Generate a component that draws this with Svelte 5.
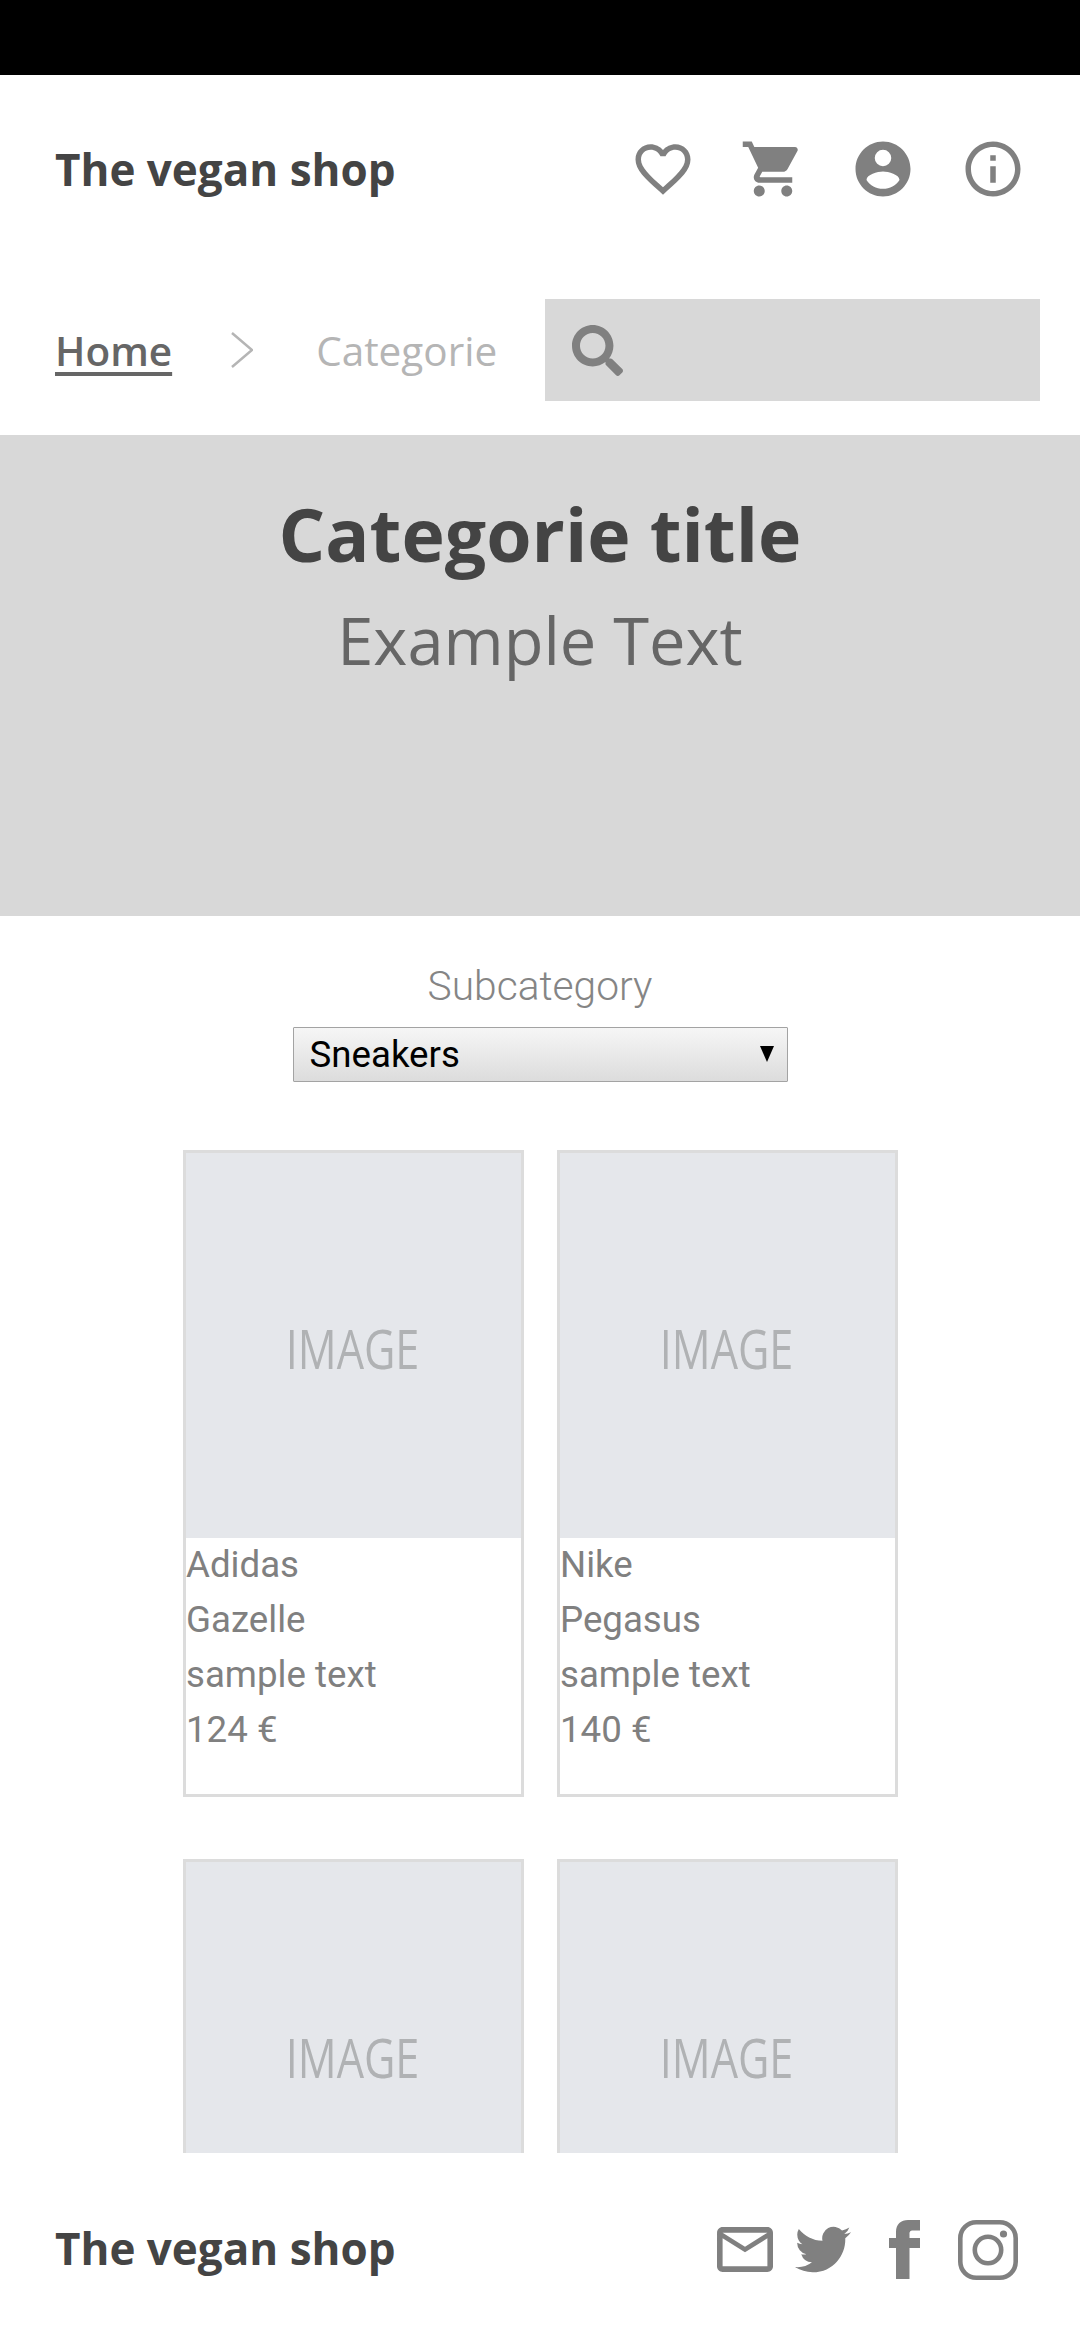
<script>
  const products = [
    { lines: ['Adidas', 'Gazelle', 'sample text', '124 €'] },
    { lines: ['Nike', 'Pegasus', 'sample text', '140 €'] },
    { lines: [] },
    { lines: [] }
  ]
</script>

<div class="phone">
  <div class="status"></div>

  <header class="top">
    <span class="brand">The vegan shop</span>
    <nav class="actions">
      <svg viewBox="0 0 24 24" aria-label="Favourites"><path d="M16.5 3c-1.74 0-3.41.81-4.5 2.09C10.91 3.81 9.24 3 7.5 3 4.42 3 2 5.42 2 8.5c0 3.78 3.4 6.86 8.55 11.54L12 21.35l1.45-1.32C18.6 15.36 22 12.28 22 8.5 22 5.42 19.58 3 16.5 3zm-4.4 15.55l-.1.1-.1-.1C7.14 14.24 4 11.39 4 8.5 4 6.5 5.5 5 7.5 5c1.54 0 3.04.99 3.57 2.36h1.87C13.46 5.99 14.96 5 16.5 5c2 0 3.5 1.5 3.5 3.5 0 2.89-3.14 5.74-7.9 10.05z"/></svg>
      <svg viewBox="0 0 24 24" aria-label="Cart"><path d="M7 18c-1.1 0-1.99.9-1.99 2S5.900 22 7 22s2-.9 2-2-.9-2-2-2zM1 2v2h2l3.600 7.590-1.350 2.450c-.160.280-.250.610-.250.960 0 1.100.9 2 2 2h12v-2H7.420c-.140 0-.250-.110-.250-.250l.030-.120.900-1.630h7.450c.750 0 1.410-.410 1.750-1.030l3.580-6.490c.080-.140.120-.310.120-.480 0-.550-.450-1-1-1H5.210l-.940-2H1zm16 16c-1.100 0-1.990.9-1.990 2s.890 2 1.990 2 2-.9 2-2-.9-2-2-2z"/></svg>
      <svg viewBox="0 0 24 24" aria-label="Account"><path fill-rule="evenodd" d="M12 2C6.480 2 2 6.480 2 12s4.480 10 10 10 10-4.480 10-10S17.520 2 12 2zm0 3a3 3 0 1 1 0 6 3 3 0 0 1 0-6zm0 14.200c-2.500 0-4.710-1.280-6-3.220.03-1.990 4-3.080 6-3.080 1.990 0 5.970 1.090 6 3.080-1.290 1.940-3.500 3.220-6 3.220z"/></svg>
      <svg viewBox="0 0 24 24" aria-label="Info"><path d="M11 7h2v2h-2zm0 4h2v6h-2zm1-9C6.480 2 2 6.480 2 12s4.480 10 10 10 10-4.480 10-10S17.520 2 12 2zm0 18c-4.410 0-8-3.590-8-8s3.590-8 8-8 8 3.590 8 8-3.590 8-8 8z"/></svg>
    </nav>
  </header>

  <div class="crumbs">
    <a href="#home" class="home">Home</a>
    <svg class="chevron" viewBox="0 0 22 36"><path d="M1 1l20 17L1 35" /></svg>
    <span class="current">Categorie</span>
    <div class="search">
      <svg viewBox="0 0 512 512"><path d="M505 442.700L405.300 343c-4.500-4.500-10.600-7-17-7H372c27.600-35.300 44-79.700 44-128C416 93.100 322.900 0 208 0S0 93.100 0 208s93.100 208 208 208c48.300 0 92.700-16.400 128-44v16.300c0 6.400 2.500 12.500 7 17l99.700 99.700c9.400 9.400 24.600 9.400 33.900 0l28.300-28.300c9.400-9.400 9.400-24.600.1-34zM208 336c-70.700 0-128-57.200-128-128 0-70.700 57.200-128 128-128 70.700 0 128 57.200 128 128 0 70.700-57.200 128-128 128z"/></svg>
    </div>
  </div>

  <main class="content">
    <section class="hero">
      <h1>Categorie title</h1>
      <p>Example Text</p>
    </section>

    <section class="filter">
      <label for="subcategory">Subcategory</label>
      <div class="select-wrap">
        <select id="subcategory">
          <option>Sneakers</option>
        </select>
      </div>
    </section>

    <section class="grid">
      {#each products as item}
        <article class="card">
          <div class="image"><span>IMAGE</span></div>
          <div class="info">
            {#each item.lines as line}
              <div>{line}</div>
            {/each}
          </div>
        </article>
      {/each}
    </section>
  </main>

  <footer class="bottom">
    <span class="brand">The vegan shop</span>
    <div class="social">
      <svg class="mail" viewBox="2 4 20 16" aria-label="Mail"><path d="M20 4H4c-1.100 0-1.990.9-1.990 2L2 18c0 1.100.9 2 2 2h16c1.100 0 2-.9 2-2V6c0-1.100-.9-2-2-2zm0 14H4V8l8 5 8-5v10zm-8-7L4 6h16l-8 5z"/></svg>
      <svg class="twitter" viewBox="0 2 24 20" aria-label="Twitter"><path d="M23.953 4.570a10 10 0 0 1-2.825.775 4.958 4.958 0 0 0 2.163-2.723c-.951.555-2.005.959-3.127 1.184a4.920 4.920 0 0 0-8.384 4.482C7.690 8.095 4.067 6.130 1.640 3.162a4.822 4.822 0 0 0-.666 2.475c0 1.710.870 3.213 2.188 4.096a4.904 4.904 0 0 1-2.228-.616v.060a4.923 4.923 0 0 0 3.946 4.827 4.996 4.996 0 0 1-2.212.085 4.936 4.936 0 0 0 4.604 3.417 9.867 9.867 0 0 1-6.102 2.105c-.39 0-.779-.023-1.170-.067a13.995 13.995 0 0 0 7.557 2.209c9.053 0 13.998-7.496 13.998-13.985 0-.210 0-.420-.015-.630A9.935 9.935 0 0 0 24 4.590z"/></svg>
      <svg class="facebook" viewBox="0 0 31 59" aria-label="Facebook"><path d="M7 59V28H0V18h7v-6C7 4 12 0 19 0h12v10.500h-7c-3 0-3.500 1.500-3.500 3.500v4H31v10H20.500v31z"/></svg>
      <svg class="insta" viewBox="0 0 60 60" aria-label="Instagram">
        <rect x="2.300" y="2.300" width="55.400" height="55.400" rx="16" class="line"/>
        <circle cx="30" cy="30" r="13.200" class="line"/>
        <circle cx="45.500" cy="14" r="3.600"/>
      </svg>
    </div>
  </footer>
</div>

<style>
  :global(body) {
    margin: 0;
    background: #fff;
  }

  .phone {
    width: 1080px;
    height: 2340px;
    display: flex;
    flex-direction: column;
    overflow: hidden;
    background: #fff;
    font-family: "Open Sans", sans-serif;
  }

  .status {
    height: 75px;
    flex: none;
    background: #000;
  }

  .top {
    height: 188px;
    flex: none;
    display: flex;
    align-items: center;
    justify-content: space-between;
    padding: 0 54px 0 55px;
    box-sizing: border-box;
  }

  .brand {
    font-size: 44px;
    font-weight: 700;
    color: #444;
  }

  .actions {
    display: flex;
    gap: 44px;
  }

  .actions svg {
    width: 66px;
    height: 66px;
    fill: #808080;
  }

  .crumbs {
    flex: none;
    height: 102px;
    margin: 36px 40px 34px 55px;
    display: flex;
    align-items: center;
  }

  .home {
    font-size: 40.500px;
    font-weight: 600;
    color: #666;
    text-decoration: underline;
    text-decoration-thickness: 4px;
    text-underline-offset: 6px;
  }

  .chevron {
    width: 22px;
    height: 36px;
    margin-left: 59px;
    fill: none;
    stroke: #b5b5b5;
    stroke-width: 2.500;
  }

  .current {
    margin-left: 63px;
    font-size: 40.500px;
    color: #b5b5b5;
  }

  .search {
    margin-left: auto;
    width: 495px;
    height: 102px;
    background: #d8d8d8;
    display: flex;
    align-items: center;
    padding-left: 27px;
    box-sizing: border-box;
  }

  .search svg {
    width: 51px;
    height: 51px;
    fill: #808080;
  }

  .content {
    flex: 1;
    min-height: 0;
    overflow: hidden;
  }

  .hero {
    height: 481px;
    background: #d8d8d8;
    padding-top: 50px;
    box-sizing: border-box;
    text-align: center;
  }

  .hero h1 {
    margin: 0;
    font-size: 73.330px;
    line-height: 98px;
    font-weight: 700;
    color: #444;
  }

  .hero p {
    margin: 12px 0 0;
    font-size: 65px;
    line-height: 90px;
    color: #666;
  }

  .filter {
    display: flex;
    flex-direction: column;
    align-items: center;
    margin-top: 45px;
  }

  .filter label {
    font-family: Roboto, sans-serif;
    font-weight: 300;
    font-size: 40.700px;
    line-height: 50px;
    color: #858585;
  }

  .select-wrap {
    position: relative;
    margin-top: 16px;
  }

  .select-wrap::after {
    content: "";
    position: absolute;
    top: 19px;
    right: 14px;
    border-top: 16px solid #000;
    border-left: 7.500px solid transparent;
    border-right: 7.500px solid transparent;
  }

  select {
    display: block;
    width: 495px;
    height: 55px;
    box-sizing: border-box;
    appearance: none;
    border: 1.500px solid #a3a3a3;
    border-radius: 1px;
    padding: 0 0 0 16px;
    background: linear-gradient(#f6f6f6, #dcdcdc);
    font-family: Roboto, sans-serif;
    font-size: 36.670px;
    color: #000;
  }

  .grid {
    display: grid;
    grid-template-columns: 341px 341px;
    justify-content: center;
    column-gap: 33px;
    row-gap: 62px;
    margin-top: 68px;
    padding-left: 1px;
  }

  .card {
    height: 647px;
    box-sizing: border-box;
    border: 3px solid #dcdcdc;
  }

  .image {
    height: 385px;
    background: #e5e7eb;
    display: flex;
    align-items: center;
    justify-content: center;
  }

  .image span {
    font-size: 54px;
    font-weight: 500;
    line-height: 60px;
    color: #b0b2b4;
    transform: scaleX(0.8);
    position: relative;
    top: 2px;
    left: -1px;
  }

  .info {
    margin-top: -1px;
    font-family: Roboto, sans-serif;
    font-size: 36.670px;
    line-height: 55px;
    color: #808080;
  }

  .bottom {
    flex: none;
    height: 187px;
    display: flex;
    align-items: center;
    justify-content: space-between;
    padding: 2px 62px 0 55px;
    box-sizing: border-box;
  }

  .social {
    display: flex;
    align-items: center;
    fill: #808080;
    position: relative;
    top: 2px;
  }

  .mail {
    width: 56px;
    height: 45px;
  }

  .twitter {
    width: 56px;
    height: 47px;
    margin-left: 22px;
  }

  .facebook {
    width: 31px;
    height: 59px;
    margin-left: 38px;
  }

  .insta {
    width: 60px;
    height: 60px;
    margin-left: 38px;
  }

  .line {
    fill: none;
    stroke: #808080;
    stroke-width: 4.600;
  }
</style>
